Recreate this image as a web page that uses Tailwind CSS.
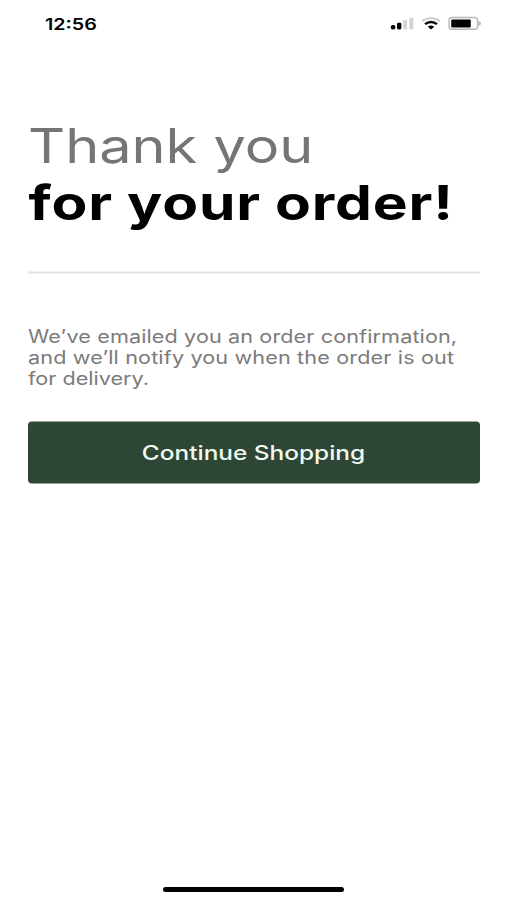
<!DOCTYPE html>
<html lang="en">
<head>
<meta charset="utf-8">
<title>Order confirmation</title>
<script src="https://cdn.jsdelivr.net/npm/@tailwindcss/browser@4"></script>
</head>
<body class="bg-white overflow-hidden font-['Inter','Liberation_Sans',sans-serif]">
<div class="flex h-[900px] w-[507px] flex-col">
  <header class="flex h-[47px] items-center justify-between pl-[44.5px] pr-[25px]">
    <span class="origin-left scale-x-[1.23] text-[16px] leading-none font-semibold text-black">12:56</span>
    <div class="flex items-center">
      <svg class="block h-[15px] w-[24px]" viewBox="0 0 24 15" aria-label="Signal">
        <rect x="0.8" y="9" width="4.6" height="4.4" rx="1.7" fill="#080808"/>
        <rect x="7" y="6.8" width="4.4" height="6.6" rx="1.3" fill="#080808"/>
        <rect x="13.2" y="4" width="4" height="9.4" rx="1" fill="#d4d4d4"/>
        <rect x="19.3" y="1.7" width="4" height="11.7" rx="1" fill="#d4d4d4"/>
      </svg>
      <svg class="ml-[7px] block h-[15px] w-[20px]" viewBox="0 0 20 15" fill="none" aria-label="Wi-Fi">
        <path d="M1.2 5.2C6 1.2 14 1.2 18.8 5.2" stroke="#cfcfcf" stroke-width="2"/>
        <path d="M4 8.2C7.5 5.2 12.5 5.2 16 8.2" stroke="#080808" stroke-width="2.4"/>
        <path d="M6.7 10.8Q10 8.4 13.3 10.8L10 13.5Z" fill="#080808"/>
      </svg>
      <svg class="ml-[7px] block h-[15px] w-[34px]" viewBox="0 0 34 15" fill="none" aria-label="Battery">
        <rect x="1" y="1.5" width="28.6" height="11.8" rx="3" stroke="#b8b8b8" stroke-width="1.4"/>
        <rect x="3.2" y="3.5" width="19.6" height="7.9" rx="1.2" fill="#030303"/>
        <path d="M30.4 4.9C33.8 6.1 33.8 8.7 30.4 9.9Z" fill="#b8b8b8"/>
      </svg>
    </div>
  </header>
  <main class="flex flex-1 flex-col pl-[28px] pr-[27px] pt-[70px]">
    <h1 class="text-[48px] leading-[57px] whitespace-nowrap">
      <span class="block w-fit origin-left scale-x-[1.2] font-normal text-[#757575]">Thank you</span>
      <span class="block w-fit origin-left scale-x-[1.22] pl-[0.5px] font-bold tracking-[0.7px] text-black [word-spacing:-0.5px]">for your order!</span>
    </h1>
    <hr class="mt-[40px] border-0 h-[2px] translate-y-[0.5px] bg-[#e3e3e3]">
    <p class="mt-[52.5px] text-[18px] leading-[21px] whitespace-nowrap text-[#7b7b7b]">
      <span class="block w-fit origin-left scale-x-[1.2] tracking-[0.09px]">We’ve emailed you an order confirmation,</span>
      <span class="block w-fit origin-left scale-x-[1.2] tracking-[0.12px]">and we’ll notify you when the order is out</span>
      <span class="block w-fit origin-left scale-x-[1.2]">for delivery.</span>
    </p>
    <button class="mt-[32px] flex h-[62px] translate-y-[0.5px] items-center justify-center rounded-[4px] bg-[#2e4635] pr-[2px] text-[20px] font-medium text-[#effaf0]"><span class="scale-x-[1.22]">Continue Shopping</span></button>
  </main>
  <footer class="flex h-[13px] justify-center"><div class="h-[5px] w-[181px] rounded-full bg-black"></div></footer>
</div>
</body>
</html>
